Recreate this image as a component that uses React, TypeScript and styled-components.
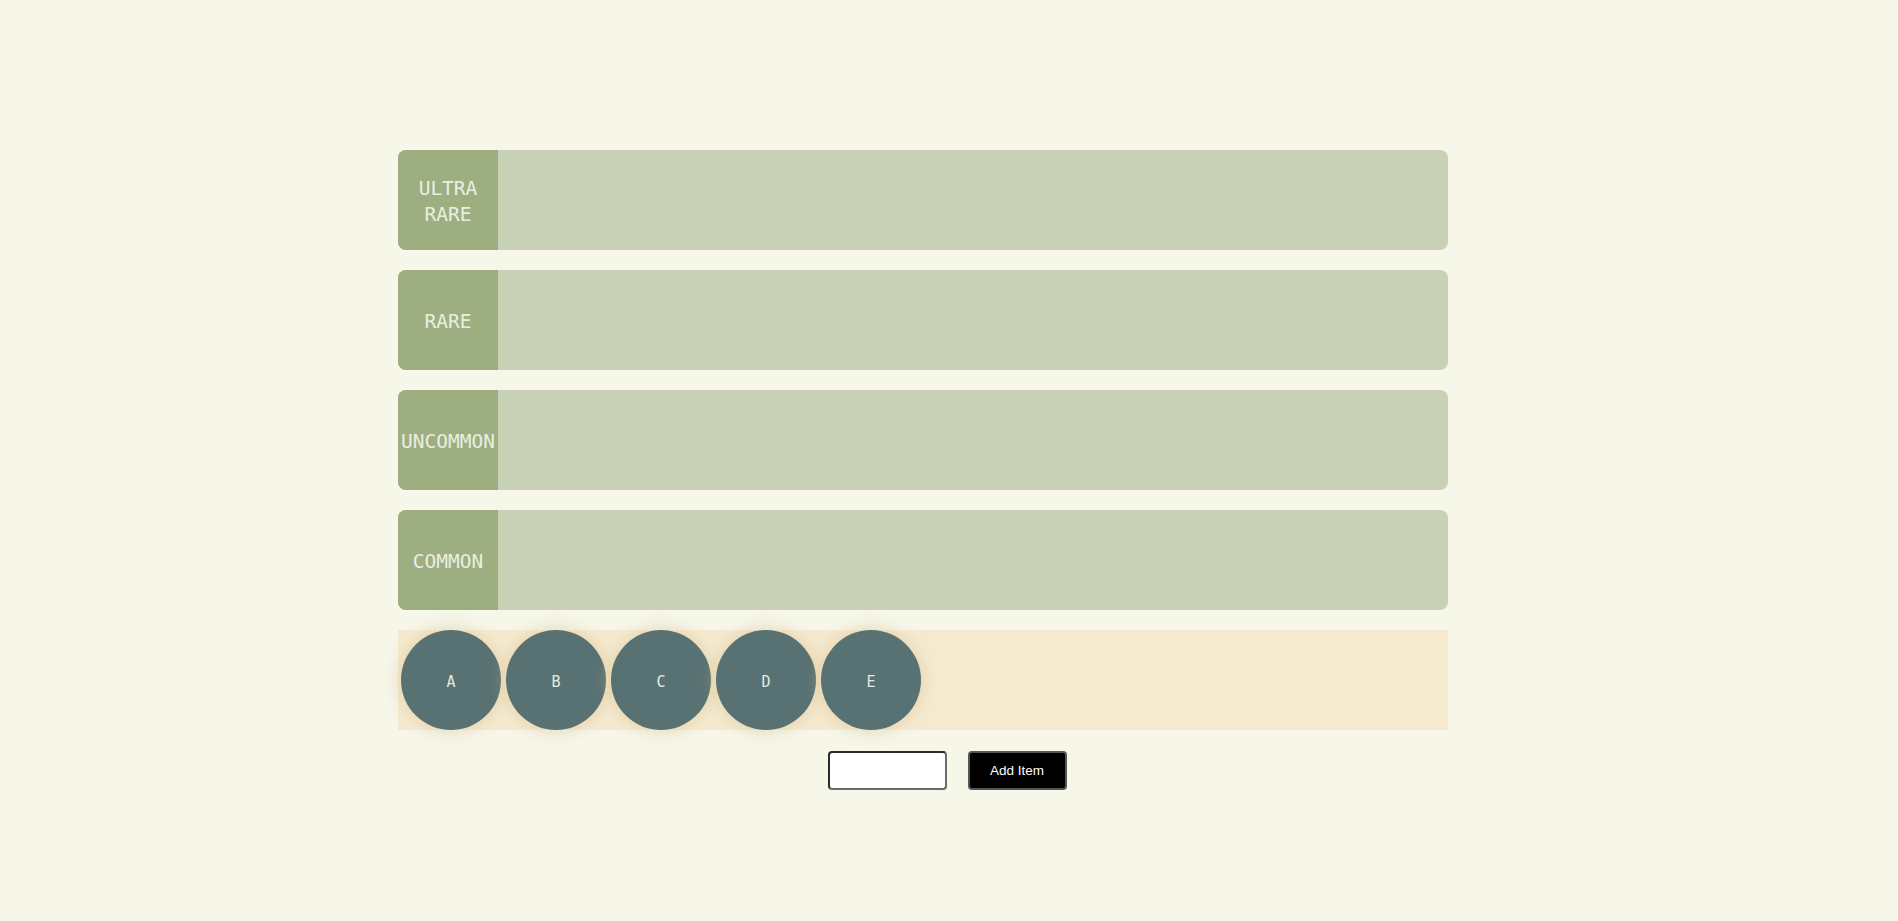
import React from "react";
import styled, { createGlobalStyle } from "styled-components";

const Global = createGlobalStyle`
  html, body { margin: 0; padding: 0; background: #f6f6e9; }
  body { font-family: "DejaVu Sans Mono", monospace; }
`;

const Page = styled.div`
  display: flex;
  flex-direction: column;
  align-items: center;
  padding-top: 150px;
`;

const Board = styled.div`
  width: 1102px;
  display: flex;
  flex-direction: column;
  gap: 20px;
`;

const Tier = styled.div`
  width: 1050px;
  height: 100px;
  display: flex;
  background: #c8d0b6;
  border-radius: 8px;
  overflow: hidden;
`;

const TierLabel = styled.div`
  width: 100px;
  flex: none;
  background: #9dae80;
  color: #eaeee0;
  display: flex;
  align-items: center;
  justify-content: center;
  text-align: center;
  font-family: "DejaVu Sans Mono", monospace;
  font-size: 19.5px;
  line-height: 26px;
  padding-top: 3px;
  box-sizing: border-box;
`;

const Pool = styled.div`
  width: 1050px;
  height: 100px;
  background: #f5ead0;
  display: flex;
  align-items: center;
  gap: 5px;
  padding-left: 3px;
  box-sizing: border-box;
`;

const Chip = styled.div`
  width: 100px;
  height: 100px;
  flex: none;
  border-radius: 50%;
  background: #587173;
  color: #e3ebe6;
  display: flex;
  align-items: center;
  justify-content: center;
  font-family: "DejaVu Sans Mono", monospace;
  font-size: 15px;
  padding-top: 3px;
  box-sizing: border-box;
  box-shadow: 0 0 14px 3px rgba(214, 190, 140, 0.45);
`;

const Controls = styled.div`
  display: flex;
  justify-content: center;
  align-items: center;
  gap: 21px;
  margin-top: 21px;
  padding-right: 4px;
`;

const Input = styled.input`
  width: 119px;
  height: 39px;
  box-sizing: border-box;
  border: 2px solid #2a2a2a;
  border-bottom-color: #6a6a66;
  border-right-color: #6a6a66;
  border-radius: 4px;
  background: #fff;
  padding: 0 6px;
  outline: none;
`;

const Button = styled.button`
  width: 99px;
  height: 39px;
  box-sizing: border-box;
  background: #000;
  color: #fff;
  border: 2px solid #555;
  border-radius: 4px;
  font-family: "Liberation Sans", Arial, sans-serif;
  font-size: 13.5px;
  cursor: pointer;
`;

const tiers = [["ULTRA", "RARE"], ["RARE"], ["UNCOMMON"], ["COMMON"]];
const items = ["A", "B", "C", "D", "E"];

export default function App() {
  return (
    <>
      <Global />
      <Page>
        <Board>
          {tiers.map((t) => (
            <Tier key={t.join(" ")}>
              <TierLabel>
                {t.map((w, i) => (
                  <React.Fragment key={w}>
                    {i > 0 && <br />}
                    {w}
                  </React.Fragment>
                ))}
              </TierLabel>
            </Tier>
          ))}
          <Pool>
            {items.map((it) => (
              <Chip key={it}>{it}</Chip>
            ))}
          </Pool>
        </Board>
        <Controls>
          <Input type="text" />
          <Button>Add Item</Button>
        </Controls>
      </Page>
    </>
  );
}
